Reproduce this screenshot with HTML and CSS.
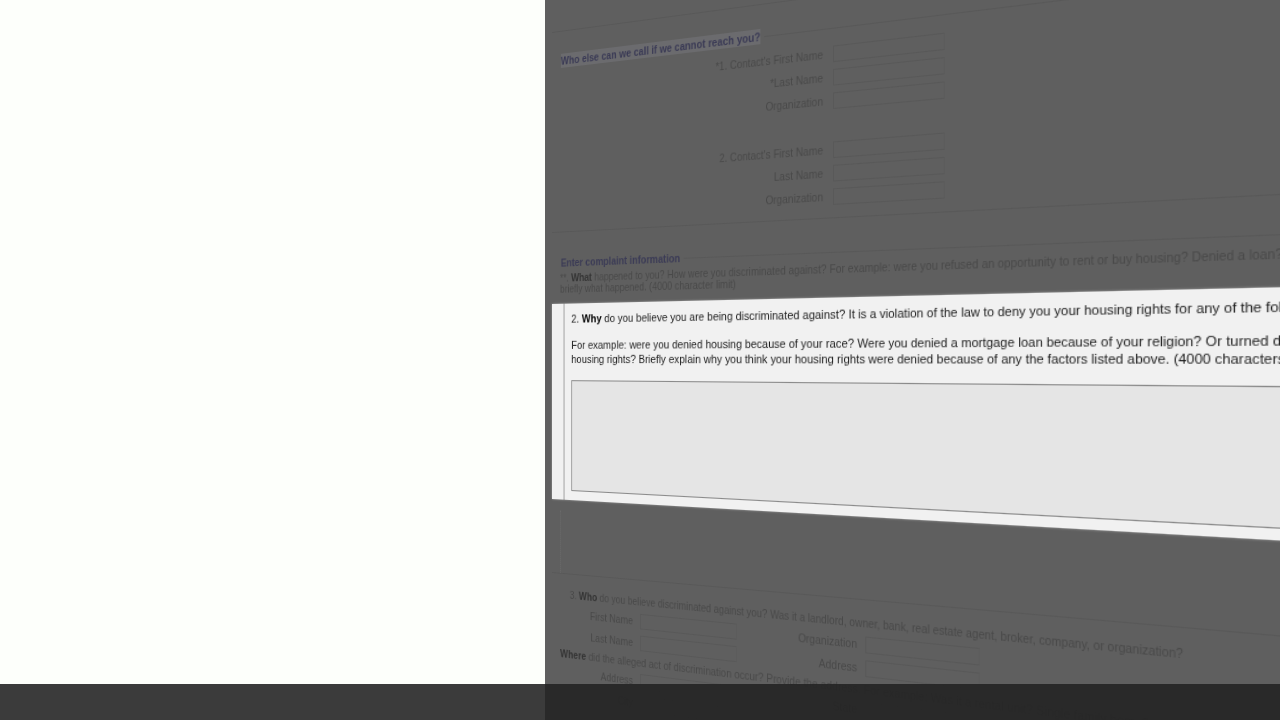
FILE: index.html
```html
<!DOCTYPE html>
<html>
<head>
    <title>Housing complaint form</title>
    <link rel="stylesheet" href="styles.css">
</head>
<body>
    <div class="blank"></div>
    <div class="stage">
        <div class="page">
            <div class="page-top"></div>

            <div class="group contact dim">
                <div class="legend"><h4 class="marked">Who else can we call if we cannot reach you?</h4><span class="rule"></span></div>
                <div class="contact-rows">
                    <label>*1. Contact's First Name</label><div class="field"></div>
                    <label>*Last Name</label><div class="field"></div>
                    <label>Organization</label><div class="field"></div>
                </div>
                <div class="contact-rows second">
                    <label>2. Contact's First Name</label><div class="field"></div>
                    <label>Last Name</label><div class="field"></div>
                    <label>Organization</label><div class="field"></div>
                </div>
            </div>

            <div class="complaint">
                <div class="dim">
                    <div class="legend"><h4>Enter complaint information</h4><span class="rule"></span></div>
                    <p class="what">**. <b>What</b> happened to you? How were you discriminated against? For example: were you refused an opportunity to rent or buy housing? Denied a loan? Told that housing was not available?<br>briefly what happened. (4000 character limit)</p>
                </div>

                <div class="panel">
                    <div class="panel-inner">
                        <p class="why">2. <b>Why</b> do you believe you are being discriminated against? It is a violation of the law to deny you your housing rights for any of the following reasons:</p>
                        <p class="why-more">For example: were you denied housing because of your race? Were you denied a mortgage loan because of your religion? Or turned down for an apartment?<br>housing rights? Briefly explain why you think your housing rights were denied because of any the factors listed above. (4000 characters limit)</p>
                        <div class="answer"></div>
                    </div>
                </div>

                <div class="gap-dotted"></div>
            </div>

            <div class="group who dim">
                <p class="who-line">3. <b>Who</b> do you believe discriminated against you? Was it a landlord, owner, bank, real estate agent, broker, company, or organization?</p>
                <div class="who-rows">
                    <label>First Name</label><div class="field"></div>
                    <label>Organization</label><div class="field"></div>
                    <label>Last Name</label><div class="field"></div>
                    <label>Address</label><div class="field"></div>
                </div>
                <p class="where"><b>Where</b> did the alleged act of discrimination occur? Provide the address. For example: Was it a rental unit? Single family home?</p>
                <div class="who-rows">
                    <label>Address</label><div class="field"></div>
                    <label>State</label><div class="field"></div>
                    <label>City</label><div class="field"></div>
                    <label>Zip</label><div class="field"></div>
                </div>
            </div>
        </div>
    </div>
    <div class="player-bar"></div>
</body>
</html>
```

FILE: styles.css
```css
html, body {
    margin: 0;
    height: 720px;
    overflow: hidden;
}
body {
    display: flex;
    font-family: "Liberation Sans", Arial, sans-serif;
    background-color: #fdfffb;
}
.blank {
    width: 545px;
    flex: none;
    background-color: #fdfffb;
}
.stage {
    flex: 1;
    height: 720px;
    overflow: hidden;
    background-color: #5f5f5f;
}
/* the form is tilted: right side is nearer, verticals stay vertical */
.page {
    width: 800px;
    height: 720px;
    margin-left: 7px;
    color: #484848;
    font-size: 10.5px;
    transform-origin: 0 360px;
    transform: matrix3d(0.8,0,0,-0.000328, 0,1,0,0, 0,0,1,0, 0,0,0,1);
}
.page-top {
    height: 32px;
    border-bottom: 1px solid #585858;
}
.dim {
    filter: blur(0.75px);
}
p {
    margin: 0;
    white-space: nowrap;
}
label {
    text-align: right;
    line-height: 15px;
    white-space: nowrap;
}
.legend {
    display: flex;
    align-items: center;
    gap: 4px;
    height: 14px;
    padding-left: 11px;
}
h4 {
    margin: 0;
    font-size: 10.6px;
    line-height: 14px;
    white-space: nowrap;
    color: #3a3a55;
}
h4.marked {
    background-color: #6b6b6e;
}
.rule {
    flex: 1;
    border-top: 1px solid #585858;
}
.field {
    box-sizing: border-box;
    height: 15px;
    border: 1px solid #585858;
    border-right-color: #5c5c5c;
}
.contact {
    padding: 22px 0 11px;
    border-bottom: 1px solid #585858;
}
.contact-rows {
    display: grid;
    grid-template-columns: 305px 108px;
    column-gap: 10px;
    row-gap: 6px;
    margin-top: 9px;
}
.contact-rows.second {
    margin-top: 29px;
}
.complaint {
    padding-top: 23px;
}
.what {
    margin: 2.5px 0 8.5px;
    padding-left: 10px;
    font-size: 10.34px;
    line-height: 11.5px;
}
.what b {
    color: #333;
}
.panel {
    height: 195px;
    background-color: #f1f1f1;
    box-shadow: 0 0 2px rgba(255,255,255,0.4);
    filter: blur(0.35px);
    color: #1c1c1c;
}
.panel-inner {
    height: 195px;
    box-sizing: border-box;
    margin-left: 14px;
    padding: 9px 0 0 8px;
    border-left: 2px solid #c4c4c4;
}
.why {
    font-size: 11.45px;
    line-height: 12px;
}
.why b, .why-more b {
    color: #000;
}
.why-more {
    margin-top: 14px;
    font-size: 11.4px;
    line-height: 13.5px;
}
.answer {
    box-sizing: border-box;
    height: 110px;
    margin-top: 14px;
    background-color: #e5e5e5;
    border: 1px solid #8a8a8a;
}
.gap-dotted {
    height: 62px;
    margin: 11px 0 0 10px;
    border-left: 1px dotted #6a6a6a;
}
.who {
    padding-top: 14px;
    border-top: 1px solid #585858;
}
.who-line {
    padding-left: 22px;
    line-height: 13px;
    font-size: 10.2px;
}
.who-line b, .where b {
    color: #333;
}
.who-rows {
    display: grid;
    grid-template-columns: 98px 109px 116px 108px;
    column-gap: 8px;
    row-gap: 6px;
}
.who-line + .who-rows {
    margin-top: 5px;
}
.where {
    margin: 5px 0 5px;
    padding-left: 10px;
    line-height: 12px;
    font-size: 10.5px;
}
.player-bar {
    position: absolute;
    left: 0;
    right: 0;
    bottom: 0;
    height: 36px;
    background-color: rgba(35,35,35,0.89);
}
```
